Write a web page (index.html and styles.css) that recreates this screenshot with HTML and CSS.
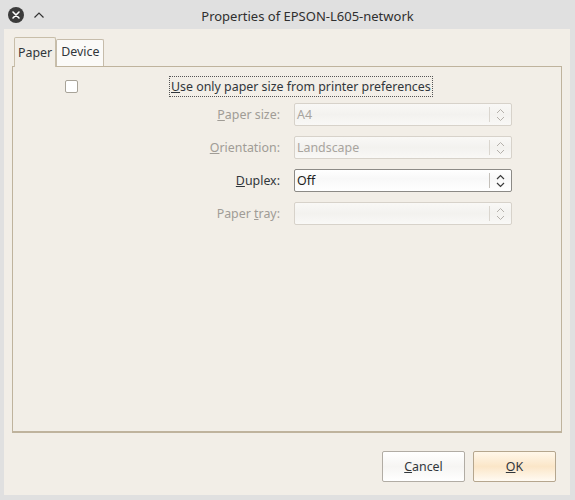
FILE: index.html
```html
<!DOCTYPE html>
<html>
<head>
<meta charset="utf-8">
<link rel="stylesheet" href="styles.css">
</head>
<body>
<div class="window">
  <div class="titlebar">
    <div class="tb-buttons">
      <span class="close-btn"><svg width="16" height="16" viewBox="0 0 16 16"><circle cx="8" cy="8" r="8" fill="#3b3b3b"/><path d="M5 5 L11 11 M11 5 L5 11" stroke="#fff" stroke-width="1.6" stroke-linecap="round"/></svg></span>
      <span class="max-btn"><svg width="12" height="8" viewBox="0 0 12 8"><path d="M1.5 6.5 L6 2 L10.5 6.5" fill="none" stroke="#333" stroke-width="1.2"/></svg></span>
    </div>
    <div class="title">Properties of EPSON-L605-network</div>
  </div>
  <div class="content">
    <div class="tabs">
      <div class="tab active">Paper</div>
      <div class="tab">Device</div>
    </div>
    <div class="pane">
      <div class="check-row">
        <span class="checkbox"></span>
        <span class="check-label"><u>U</u>se only paper size from printer preferences</span>
      </div>
      <div class="form">
        <label class="lbl disabled"><u>P</u>aper size:</label>
        <div class="combo disabled"><span class="val">A4</span><span class="arrows"><svg width="9" height="14" viewBox="0 0 9 14"><path d="M1 5 L4.5 1.5 L8 5 M1 9 L4.5 12.5 L8 9" fill="none" stroke="currentColor" stroke-width="1"/></svg></span></div>
        <label class="lbl disabled"><u>O</u>rientation:</label>
        <div class="combo disabled"><span class="val">Landscape</span><span class="arrows"><svg width="9" height="14" viewBox="0 0 9 14"><path d="M1 5 L4.5 1.5 L8 5 M1 9 L4.5 12.5 L8 9" fill="none" stroke="currentColor" stroke-width="1"/></svg></span></div>
        <label class="lbl"><u>D</u>uplex:</label>
        <div class="combo"><span class="val">Off</span><span class="arrows"><svg width="9" height="14" viewBox="0 0 9 14"><path d="M1 5 L4.5 1.5 L8 5 M1 9 L4.5 12.5 L8 9" fill="none" stroke="currentColor" stroke-width="1.2"/></svg></span></div>
        <label class="lbl disabled">Paper <u>t</u>ray:</label>
        <div class="combo disabled"><span class="val"></span><span class="arrows"><svg width="9" height="14" viewBox="0 0 9 14"><path d="M1 5 L4.5 1.5 L8 5 M1 9 L4.5 12.5 L8 9" fill="none" stroke="currentColor" stroke-width="1"/></svg></span></div>
      </div>
    </div>
    <div class="buttons">
      <button class="btn"><u>C</u>ancel</button>
      <button class="btn default"><u>O</u>K</button>
    </div>
  </div>
</div>
</body>
</html>
```
FILE: styles.css
```css
html, body {
  margin: 0;
  padding: 0;
  background: #e0e0e0;
  font-family: "Noto Sans", "DejaVu Sans", sans-serif;
  font-size: 12.4px;
  color: #31363b;
}
.window {
  width: 575px;
  height: 500px;
  display: flex;
  flex-direction: column;
}
.titlebar {
  height: 29px;
  position: relative;
  display: flex;
  align-items: center;
  justify-content: center;
  flex-shrink: 0;
}
.tb-buttons {
  position: absolute;
  left: 8px;
  top: 7px;
  display: flex;
  align-items: center;
  gap: 9px;
}
.close-btn, .max-btn { display: flex; }
.title {
  font-size: 13px;
  color: #2f2f2f;
  margin-left: 40px;
  margin-top: 3px;
}
.content {
  margin: 0 5px 5px 4px;
  background: #f2eee7;
  flex: 1;
  display: flex;
  flex-direction: column;
}
.tabs {
  display: flex;
  align-items: flex-end;
  padding: 8px 0 0 10px;
  height: 29px;
  position: relative;
  z-index: 1;
}
.tab {
  border: 1px solid #c6bcab;
  border-bottom: none;
  border-radius: 2px 2px 0 0;
  padding: 0 4px;
  height: 26px;
  line-height: 24px;
  background: #fbfaf8;
  color: #31363b;
}
.tab.active {
  background: #f2eee7;
  height: 29px;
  line-height: 29px;
  padding: 0 3px;
  margin-bottom: -1px;
  border-color: #c8bea9;
}
.pane {
  margin: 0 8px 0 8px;
  border: 1px solid #bfb39d;
  border-bottom-width: 2px;
  height: 367px;
  box-sizing: border-box;
  display: flex;
  flex-direction: column;
}
.check-row {
  display: flex;
  align-items: center;
  height: 20px;
  margin-top: 9px;
}
.checkbox {
  width: 11px;
  height: 11px;
  border: 1px solid #a8a398;
  border-radius: 2px;
  background: #fff;
  margin-left: 52px;
}
.check-label {
  margin-left: 92px;
  outline: 1px dotted #555;
  padding: 0 1px;
  line-height: 19px;
}
.form {
  display: grid;
  grid-template-columns: 267px 218px;
  column-gap: 14px;
  row-gap: 10px;
  margin-top: 7px;
  align-items: center;
}
.lbl {
  text-align: right;
}
.lbl.disabled { color: #a09c96; }
.combo {
  height: 23px;
  box-sizing: border-box;
  border: 1px solid #8c8a86;
  border-radius: 2px;
  background: linear-gradient(#ffffff, #f8f8f8 40%, #ffffff);
  display: flex;
  align-items: center;
  color: #1e1e1e;
}
.combo.disabled {
  border-color: #d7d2ca;
  background: linear-gradient(#f9f8f6, #f3f2ef 50%, #f9f8f6);
  color: #a8a49e;
}
.val {
  flex: 1;
  padding-left: 2px;
}
.arrows {
  width: 20px;
  height: 15px;
  border-left: 1px solid #c4c0ba;
  display: flex;
  align-items: center;
  justify-content: center;
  color: #3a3a3a;
  margin-right: 1px;
}
.combo.disabled .arrows {
  color: #b4b0aa;
  border-left-color: #dad6cf;
}
.buttons {
  display: flex;
  justify-content: flex-end;
  gap: 8px;
  margin: 18px 14px 0 0;
}
.btn {
  font-family: "Noto Sans", "DejaVu Sans", sans-serif;
  font-size: 12.4px;
  color: #31363b;
  width: 83px;
  height: 31px;
  border: 1px solid #b1aca4;
  border-radius: 2px;
  background: linear-gradient(#ffffff, #f6f5f3 50%, #ffffff);
  padding: 0;
}
.btn.default {
  border-color: #b5a68e;
  background: linear-gradient(#fff7ea, #fbe6c8 50%, #fffaf2);
}
```
